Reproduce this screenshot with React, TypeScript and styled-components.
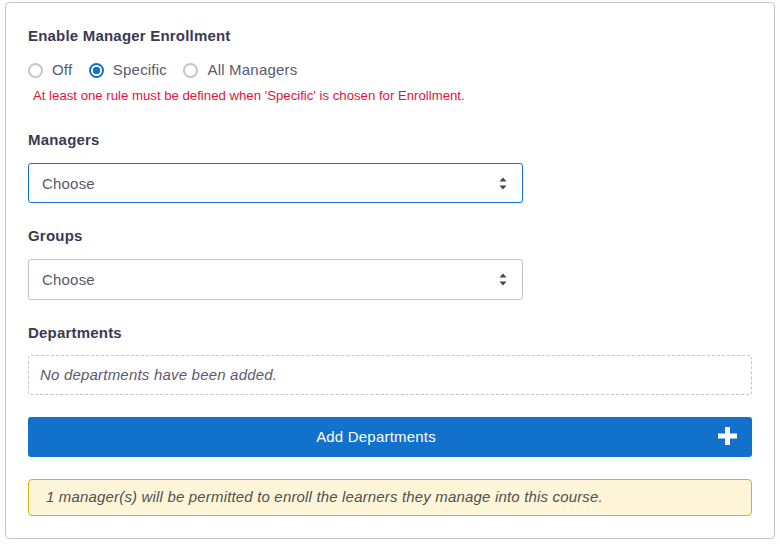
import styled, { createGlobalStyle } from "styled-components";

const GlobalStyle = createGlobalStyle`
  html, body {
    margin: 0;
    background: #fdfdfd;
    font-family: "Liberation Sans", Arial, sans-serif;
  }
`;

const ChevronIcon = () => (
  <svg width="8" height="13" viewBox="0 0 8 13">
    <path d="M4 0.5 L7.5 4.5 H0.5 Z" fill="#45445c" />
    <path d="M4 12.5 L7.5 8.5 H0.5 Z" fill="#45445c" />
  </svg>
);

const SelectField = ({ focused }: { focused?: boolean }) => (
  <Select $focused={focused}>
    Choose
    <ChevronIcon />
  </Select>
);

const RadioOption = ({ label, checked }: { label: string; checked?: boolean }) => (
  <RadioLabel>
    <RadioDot $checked={checked} />
    {label}
  </RadioLabel>
);

export default function App() {
  return (
    <>
      <GlobalStyle />
      <Panel>
        <Heading>Enable Manager Enrollment</Heading>
        <RadioRow>
          <RadioOption label="Off" />
          <RadioOption label="Specific" checked />
          <RadioOption label="All Managers" />
        </RadioRow>
        <ErrorText>
          At least one rule must be defined when 'Specific' is chosen for Enrollment.
        </ErrorText>

        <ManagersLabel>Managers</ManagersLabel>
        <SelectField focused />

        <FieldLabel>Groups</FieldLabel>
        <SelectField />

        <FieldLabel>Departments</FieldLabel>
        <EmptyBox>No departments have been added.</EmptyBox>

        <AddButton>
          Add Departments
          <PlusIcon>
            <svg width="20" height="20" viewBox="0 0 20 20">
              <path d="M7 1 H12 V7.5 H19 V12.5 H12 V19 H7 V12.5 H0 V7.5 H7 Z" fill="#fff" />
            </svg>
          </PlusIcon>
        </AddButton>

        <Notice>1 manager(s) will be permitted to enroll the learners they manage into this course.</Notice>
      </Panel>
    </>
  );
}

const Panel = styled.div`
  box-sizing: border-box;
  width: 770px;
  height: 537px;
  margin: 2px 0 0 5px;
  padding: 24px 22px 0;
  background: #fff;
  border: 1px solid #c4c3d0;
  border-radius: 4px;
  color: #3b3a52;
`;

const Heading = styled.div`
  font-size: 15px;
  line-height: 18px;
  font-weight: bold;
  letter-spacing: 0.2px;
`;

const RadioRow = styled.div`
  display: flex;
  gap: 16.5px;
  margin-top: 16px;
`;

const RadioLabel = styled.label`
  display: flex;
  align-items: center;
  gap: 9px;
  font-size: 15px;
  letter-spacing: 0.2px;
  line-height: 18px;
  color: #5a596e;
`;

const RadioDot = styled.span<{ $checked?: boolean }>`
  box-sizing: border-box;
  width: 15px;
  height: 15px;
  border-radius: 50%;
  border: ${(p) => (p.$checked ? "2px solid #1271cb" : "2px solid #c4c3d0")};
  background: ${(p) => (p.$checked ? "radial-gradient(circle, #1271cb 0 3.5px, #fff 4px)" : "#fff")};
`;

const ErrorText = styled.div`
  margin: 9px 0 0 5px;
  font-size: 13.2px;
  line-height: 16px;
  color: #e0143c;
`;

const FieldLabel = styled.div`
  margin-top: 24px;
  font-size: 15px;
  line-height: 18px;
  font-weight: bold;
  letter-spacing: 0.2px;
`;

const ManagersLabel = styled(FieldLabel)`
  margin-top: 27px;
`;

const Select = styled.div<{ $focused?: boolean }>`
  box-sizing: border-box;
  display: flex;
  align-items: center;
  justify-content: space-between;
  width: 495px;
  height: ${(p) => (p.$focused ? "40px" : "41px")};
  margin-top: 14px;
  padding: 0 15px 0 13px;
  background: #fff;
  border: 1px solid ${(p) => (p.$focused ? "#1271cb" : "#c4c3d0")};
  border-radius: 3px;
  font-size: 15px;
  letter-spacing: 0.2px;
  color: #5a596e;
`;

const EmptyBox = styled.div`
  box-sizing: border-box;
  height: 40px;
  margin-top: 13px;
  padding: 0 11px 2px;
  display: flex;
  align-items: center;
  border: 1px dashed #c4c3d0;
  border-radius: 3px;
  font-size: 15px;
  letter-spacing: 0.2px;
  font-style: italic;
  color: #5a596e;
`;

const AddButton = styled.button`
  position: relative;
  display: block;
  box-sizing: border-box;
  width: 100%;
  height: 40px;
  margin-top: 22px;
  padding: 0 28px 2px 0;
  border: 0;
  border-radius: 3px;
  background: #1271cb;
  color: #fff;
  font-family: inherit;
  font-size: 15px;
  letter-spacing: 0.2px;
`;

const PlusIcon = styled.span`
  position: absolute;
  top: 9px;
  right: 14px;
  display: flex;
`;

const Notice = styled.div`
  box-sizing: border-box;
  display: flex;
  align-items: center;
  height: 37px;
  margin-top: 22px;
  padding: 0 17px 2px;
  background: #fff6d9;
  border: 1px solid #e0ac1c;
  border-radius: 4px;
  font-size: 15px;
  letter-spacing: 0.17px;
  font-style: italic;
  color: #505050;
`;
